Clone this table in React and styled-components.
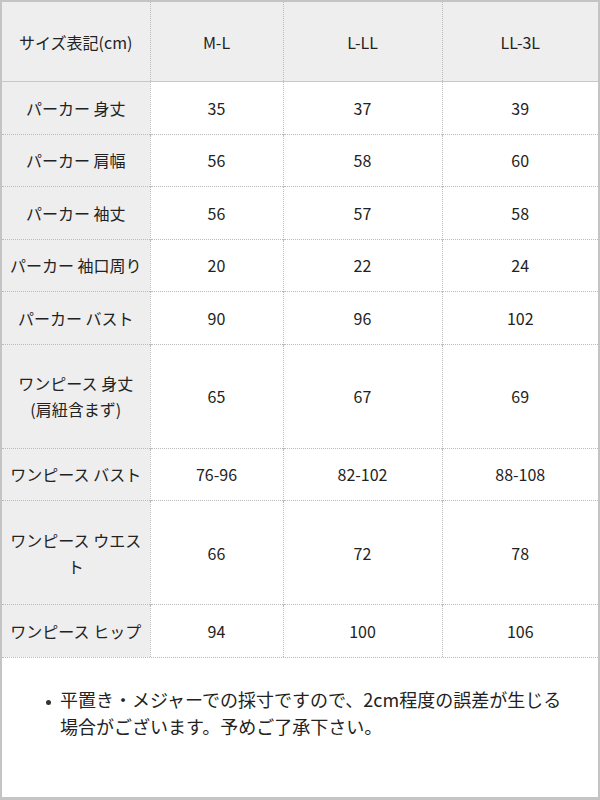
import React from "react";
import styled, { createGlobalStyle } from "styled-components";

const GlobalStyle = createGlobalStyle`
  html, body {
    margin: 0;
    padding: 0;
    background: #fff;
  }
  body {
    font-family: "Noto Sans CJK JP", "Noto Sans", sans-serif;
    color: #222;
  }
`;

const Frame = styled.div`
  width: 600px;
  height: 800px;
  box-sizing: border-box;
  border: 2px solid #c4c4c4;
  border-bottom-width: 3px;
  display: flex;
  flex-direction: column;
`;

const Table = styled.table`
  width: 100%;
  table-layout: fixed;
  border-collapse: collapse;
  font-size: 16px;
`;

const HeadCell = styled.th`
  height: 79px;
  padding: 0 5px;
  font-weight: normal;
  background: #eeeeee;
  border-bottom: 1px solid #c8c8c8;
  border-left: 1px dotted #bbb;
  &:first-child {
    border-left: none;
  }
`;

const LabelCell = styled.th`
  height: ${({ tall }) => (tall ? "104px" : "52.5px")};
  padding: 0 5px;
  font-weight: normal;
  line-height: 26px;
  background: #eeeeee;
  border-top: 1px dotted #bbb;
  box-sizing: border-box;
`;

const Cell = styled.td`
  text-align: center;
  padding: 0 5px;
  background: #fff;
  border-top: 1px dotted #bbb;
  border-left: 1px dotted #bbb;
`;

const Row = styled.tr`
  &:first-child ${LabelCell}, &:first-child ${Cell} {
    border-top: none;
  }
`;

const Note = styled.div`
  flex: 1;
  border-top: 1px dotted #bbb;
  padding: 28px 20px 0 58px;
  font-size: 18px;
  line-height: 27px;
  color: #222;
`;

const Bullet = styled.p`
  position: relative;
  margin: 0;
  &::before {
    content: "";
    position: absolute;
    left: -14px;
    top: 14px;
    width: 5px;
    height: 5px;
    border-radius: 50%;
    background: #333;
  }
`;

const sizes = ["M-L", "L-LL", "LL-3L"];

const rows = [
  { label: "パーカー 身丈", values: ["35", "37", "39"] },
  { label: "パーカー 肩幅", values: ["56", "58", "60"] },
  { label: "パーカー 袖丈", values: ["56", "57", "58"] },
  { label: "パーカー 袖口周り", values: ["20", "22", "24"] },
  { label: "パーカー バスト", values: ["90", "96", "102"] },
  { label: ["ワンピース 身丈", "(肩紐含まず)"], values: ["65", "67", "69"], tall: true },
  { label: "ワンピース バスト", values: ["76-96", "82-102", "88-108"] },
  { label: "ワンピース ウエスト", values: ["66", "72", "78"], tall: true },
  { label: "ワンピース ヒップ", values: ["94", "100", "106"] },
];

export default function App() {
  return (
    <>
      <GlobalStyle />
      <Frame>
        <Table>
          <colgroup>
            <col style={{ width: 148 }} />
            <col style={{ width: 133 }} />
            <col style={{ width: 159 }} />
            <col />
          </colgroup>
          <thead>
            <tr>
              <HeadCell>サイズ表記(cm)</HeadCell>
              {sizes.map((s) => (
                <HeadCell key={s}>{s}</HeadCell>
              ))}
            </tr>
          </thead>
          <tbody>
            {rows.map((r, i) => (
              <Row key={i}>
                <LabelCell tall={r.tall}>
                  {Array.isArray(r.label)
                    ? r.label.map((l, j) => (
                        <React.Fragment key={j}>
                          {j > 0 && <br />}
                          {l}
                        </React.Fragment>
                      ))
                    : r.label}
                </LabelCell>
                {r.values.map((v, j) => (
                  <Cell key={j}>{v}</Cell>
                ))}
              </Row>
            ))}
          </tbody>
        </Table>
        <Note>
          <Bullet>
            平置き・メジャーでの採寸ですので、2cm程度の誤差が生じる場合がございます。予めご了承下さい。
          </Bullet>
        </Note>
      </Frame>
    </>
  );
}
